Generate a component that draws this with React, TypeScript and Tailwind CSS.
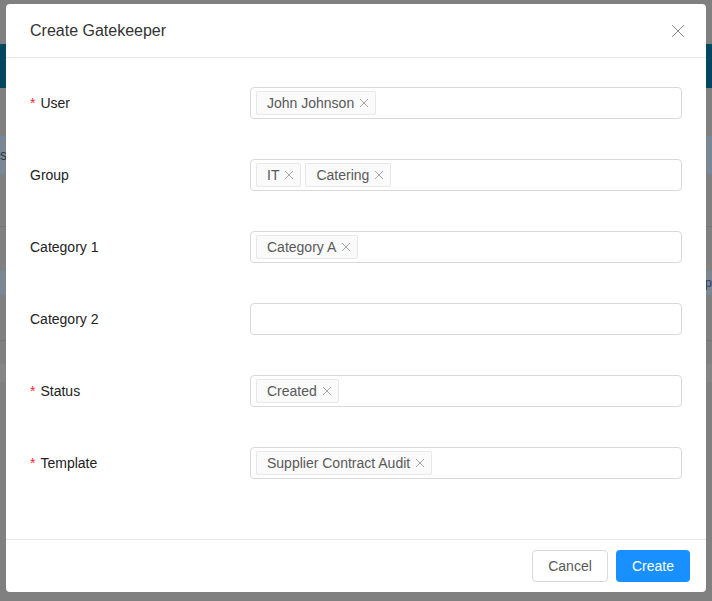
interface Field {
  label: string;
  required?: boolean;
  tags: string[];
}

const FIELDS: Field[] = [
  { label: 'User', required: true, tags: ['John Johnson'] },
  { label: 'Group', tags: ['IT', 'Catering'] },
  { label: 'Category 1', tags: ['Category A'] },
  { label: 'Category 2', tags: [] },
  { label: 'Status', required: true, tags: ['Created'] },
  { label: 'Template', required: true, tags: ['Supplier Contract Audit'] },
];

function Cross({ size, className }: { size: number; className?: string }) {
  return (
    <svg width={size} height={size} viewBox="0 0 12 12" className={className} fill="none" stroke="currentColor" strokeWidth={12 / size} strokeLinecap="square">
      <path d="M0.5 0.5 L11.5 11.5 M11.5 0.5 L0.5 11.5" />
    </svg>
  );
}

function Tag({ text }: { text: string }) {
  return (
    <span className="flex items-center h-6 pl-[10px] pr-[7px] bg-[#fafafa] border border-[#e8e8e8] rounded-[2px] text-[14px] text-[#595959]">
      {text}
      <Cross size={8} className="ml-[6px] text-[#a6a6a6]" />
    </span>
  );
}

export default function App() {
  return (
    <div
      className="relative w-[712px] h-[601px] overflow-hidden bg-[#808080]"
      style={{ fontFamily: '"Liberation Sans", Arial, sans-serif' }}
    >
      {/* dimmed page behind */}
      <div className="absolute left-0 right-0 top-[44px] h-[44px] bg-[#00475f]" />
      <div className="absolute left-0 right-0 top-[136px] h-[38px] bg-[#7a8794] border-y border-[#6c8aa3] text-[14px] text-[#2c3d4d] flex items-center">
        <span className="pl-0">s</span>
      </div>
      <div className="absolute left-0 right-0 top-[226px] border-t border-[#747474]" />
      <div className="absolute left-0 right-0 top-[271px] h-[24px] border-y border-[#6c8aa3] bg-[#7d8791] flex items-center justify-end text-[13px] text-[#2c3d60]">
        <span className="pr-0">op</span>
      </div>
      <div className="absolute left-0 right-0 top-[340px] border-t border-[#747474]" />
      <div className="absolute left-0 right-0 top-[364px] h-[18px] bg-[#858585]" />

      {/* modal */}
      <div className="absolute left-[6px] top-[4px] w-[700px] h-[588px] bg-white rounded-[4px] flex flex-col">
        <div className="h-[54px] px-6 flex items-center justify-between border-b border-[#e8e8e8]">
          <h3 className="text-[16px] text-[#333] pt-[1px]">Create Gatekeeper</h3>
          <button type="button" className="text-[#8c8c8c] mr-[-2px] mt-[1px]">
            <Cross size={12} />
          </button>
        </div>

        <div className="flex-1 px-6 pt-[29px] flex flex-col gap-[40px]">
          {FIELDS.map((f) => (
            <div key={f.label} className="flex items-center h-8">
              <label className="w-[220px] text-[14px] text-[#222] flex items-center">
                {f.required && <span className="text-[#f5222d] mr-[5px] text-[14px]">*</span>}
                {f.label}
              </label>
              <div className="flex-1 h-8 border border-[#d9d9d9] rounded-[4px] flex items-center gap-[4px] px-[5px]">
                {f.tags.map((t) => (
                  <Tag key={t} text={t} />
                ))}
              </div>
            </div>
          ))}
        </div>

        <div className="h-[53px] border-t border-[#e8e8e8] px-4 flex items-center justify-end gap-2">
          <button type="button" className="h-8 w-[76px] border border-[#d9d9d9] rounded-[4px] text-[14px] text-[#595959] bg-white">
            Cancel
          </button>
          <button type="button" className="h-8 w-[74px] rounded-[4px] text-[14px] text-white bg-[#1890ff]">
            Create
          </button>
        </div>
      </div>
    </div>
  );
}
